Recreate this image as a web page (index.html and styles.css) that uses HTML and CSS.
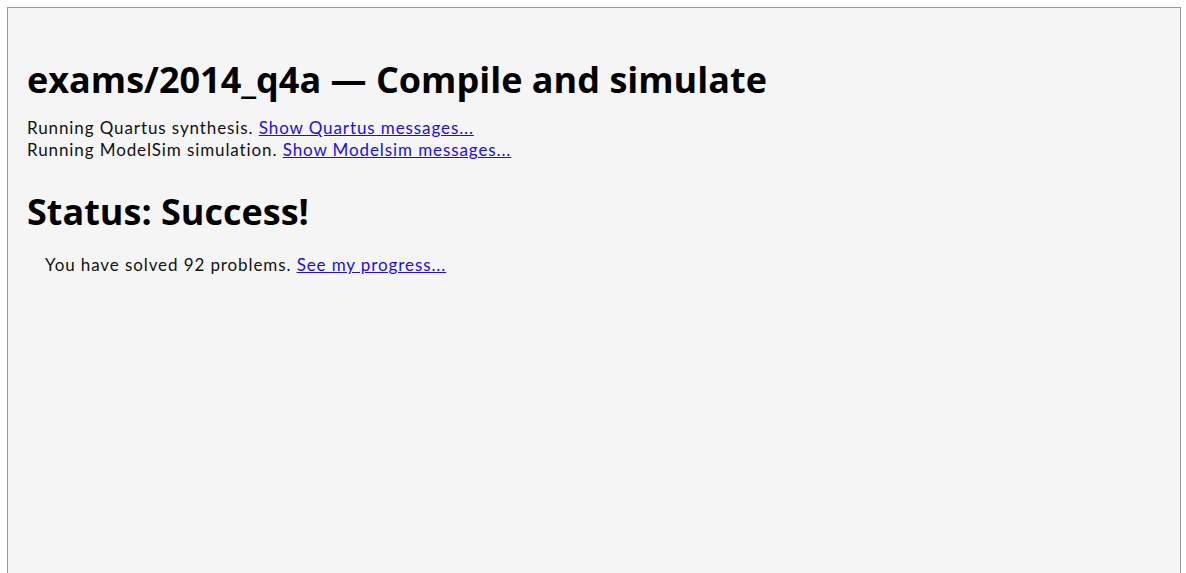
FILE: index.html
```html
<!DOCTYPE html>
<html>
<head>
<meta charset="utf-8">
<link rel="stylesheet" href="styles.css">
</head>
<body>
<div class="page">
  <h1 class="title">exams/2014_q4a — Compile and simulate</h1>
  <div class="log">
    <div>Running Quartus synthesis. <a href="#">Show Quartus messages...</a></div>
    <div>Running ModelSim simulation. <a href="#">Show Modelsim messages...</a></div>
  </div>
  <h2 class="status">Status: Success!</h2>
  <p class="solved">You have solved 92 problems. <a href="#">See my progress...</a></p>
</div>
</body>
</html>
```
FILE: styles.css
```css
html, body {
  margin: 0;
  padding: 0;
  background: #ffffff;
  overflow: hidden;
}
.page {
  margin: 7px 5px 0 7px;
  border: 1px solid #999999;
  border-bottom: none;
  background: #f5f5f5;
  padding: 38px 19px 0 19px;
  height: 560px;
  font-family: "Lato", "Liberation Sans", sans-serif;
  font-size: 17px;
  letter-spacing: 0.9px;
  color: #111;
}
.title {
  font-family: "Open Sans", sans-serif;
  font-weight: 700;
  font-size: 36px;
  letter-spacing: 0;
  margin: 12px 0 16px 0;
  line-height: 1.2;
  color: #000;
}
.log {
  line-height: 22px;
}
a {
  color: #1a0dee;
}
.status {
  font-family: "Open Sans", sans-serif;
  font-weight: 700;
  font-size: 36px;
  letter-spacing: 0;
  margin: 29px 0 21px 0;
  line-height: 1.2;
  color: #000;
}
.solved {
  margin: 0 0 0 18px;
  line-height: 22px;
}
```
